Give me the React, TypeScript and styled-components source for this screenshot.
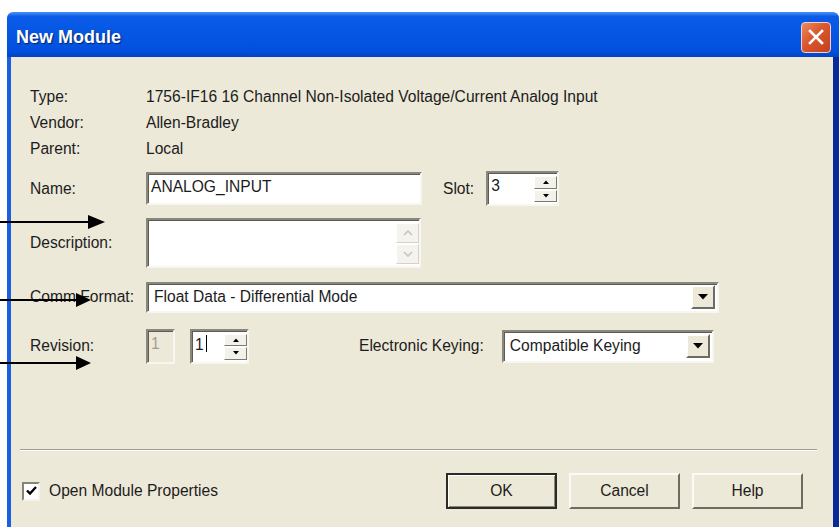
import styled, { createGlobalStyle } from 'styled-components';

const GlobalStyle = createGlobalStyle`
  html, body {
    margin: 0;
    padding: 0;
    background: #fff;
  }
  body {
    font-family: "Liberation Sans", Arial, sans-serif;
    font-size: 15.6px;
    color: #1c1c1c;
  }
`;

const Page = styled.div`
  position: relative;
  width: 839px;
  height: 527px;
  overflow: hidden;
  background: #fff;
`;

const Window = styled.div`
  margin: 12px 0 0 7px;
  width: 832px;
  height: 530px;
  display: flex;
  flex-direction: column;
`;

const TitleBar = styled.div`
  height: 45px;
  flex: none;
  display: flex;
  align-items: center;
  justify-content: space-between;
  padding: 0 8px 0 9px;
  border-radius: 6px 6px 0 0;
  background: linear-gradient(
    to bottom,
    #4a92f6 0%,
    #0a5ce8 10%,
    #0556e4 45%,
    #0350de 85%,
    #0344c8 100%
  );
`;

const Title = styled.span`
  font-family: "Liberation Sans", Arial, sans-serif;
  font-weight: 700;
  font-size: 18px;
  color: #fff;
  text-shadow: 1px 1px 1px #0b2270;
  padding-top: 6px;
`;

const CloseButton = styled.div`
  width: 30px;
  height: 31px;
  box-sizing: border-box;
  margin-top: 5px;
  border: 1px solid #f2d2c4;
  border-radius: 4px;
  background: linear-gradient(135deg, #ee8a62 0%, #d9562e 45%, #c2401c 100%);
  display: flex;
  align-items: center;
  justify-content: center;
`;

const Frame = styled.div`
  flex: 1;
  background: #ece9d8;
  border-left: 4px solid #1a5fe0;
  border-right: 6px solid #0a2a9c;
  display: flex;
  flex-direction: column;
`;

const Form = styled.div`
  padding: 27px 0 0 19px;
  display: flex;
  flex-direction: column;
`;

const Row = styled.div<{ $top?: number; $height: number }>`
  display: flex;
  align-items: center;
  height: ${(p) => p.$height}px;
  margin-top: ${(p) => p.$top ?? 0}px;
`;

const Label = styled.span`
  width: 116px;
  flex: none;
  white-space: nowrap;
`;

const Value = styled.span`
  white-space: nowrap;
`;

const InlineLabel = styled.span<{ $left: number; $right: number }>`
  margin-left: ${(p) => p.$left}px;
  margin-right: ${(p) => p.$right}px;
  white-space: nowrap;
`;

const Sunken = styled.div<{ $width: number; $height: number; $disabled?: boolean }>`
  box-sizing: border-box;
  width: ${(p) => p.$width}px;
  height: ${(p) => p.$height}px;
  flex: none;
  display: flex;
  align-items: flex-start;
  justify-content: space-between;
  padding: 4px 0 0 3px;
  border: 2px solid;
  border-color: #8a887c #f7f6f0 #f7f6f0 #8a887c;
  box-shadow: inset 1px 1px 0 #5d5b52;
  background: ${(p) => (p.$disabled ? '#ece9d8' : '#fff')};
  color: ${(p) => (p.$disabled ? '#a19f94' : '#1c1c1c')};
`;

const ComboBox = styled(Sunken)`
  align-items: center;
  padding: 0 2px 0 6px;
`;

const Caret = styled.span`
  display: inline-block;
  width: 1px;
  height: 17px;
  background: #000;
  margin-left: 2px;
  vertical-align: -2px;
`;

const SpinColumn = styled.div`
  display: flex;
  flex-direction: column;
  align-self: stretch;
  width: 23px;
  margin: -2px 0 2px 0;
`;

const SpinButton = styled.div<{ $disabled?: boolean }>`
  flex: 1;
  box-sizing: border-box;
  display: flex;
  align-items: center;
  justify-content: center;
  background: ${(p) => (p.$disabled ? '#f4f3ee' : '#f2f1ea')};
  border: 1px solid;
  border-color: ${(p) =>
    p.$disabled ? '#fff #d6d3c6 #d6d3c6 #fff' : '#fff #7d7b70 #7d7b70 #fff'};
  margin-top: 1px;
`;

const DropButton = styled.div`
  width: 24px;
  height: 24px;
  box-sizing: border-box;
  display: flex;
  align-items: center;
  justify-content: center;
  background: #ece9d8;
  border: 2px solid;
  border-color: #fff #6e6c62 #6e6c62 #fff;
`;

const Separator = styled.div`
  margin: 85px 16px 0 9px;
  height: 1px;
  background: #a19f92;
  border-bottom: 1px solid #fff;
`;

const Footer = styled.div`
  margin-top: 22px;
  padding: 0 30px 0 11px;
  display: flex;
  align-items: center;
  justify-content: space-between;
`;

const CheckRow = styled.label`
  display: flex;
  align-items: center;
  gap: 9px;
`;

const CheckBox = styled.span`
  width: 18px;
  height: 19px;
  box-sizing: border-box;
  display: flex;
  align-items: center;
  justify-content: center;
  background: #fff;
  border: 2px solid;
  border-color: #85837a #f4f3ee #f4f3ee #85837a;
`;

const ButtonRow = styled.div`
  display: flex;
  gap: 12px;
`;

const Button = styled.div<{ $default?: boolean }>`
  width: 111px;
  height: 36px;
  box-sizing: border-box;
  display: flex;
  align-items: center;
  justify-content: center;
  background: #ece9d8;
  border: 2px solid;
  border-color: ${(p) => (p.$default ? '#2a2a26' : '#fbfaf6 #6e6c62 #6e6c62 #fbfaf6')};
  box-shadow: ${(p) =>
    p.$default ? 'inset 1px 1px 0 #fff, inset -1px -1px 0 #8a887c' : 'none'};
`;

const Annotations = styled.svg`
  position: absolute;
  left: 0;
  top: 0;
  pointer-events: none;
`;

const UpTri = ({ color = '#000' }: { color?: string }) => (
  <svg width="6" height="4" viewBox="0 0 6 4">
    <path d="M0 4 L3 0.5 L6 4 Z" fill={color} />
  </svg>
);

const DownTri = ({ color = '#000' }: { color?: string }) => (
  <svg width="6" height="4" viewBox="0 0 6 4">
    <path d="M0 0 L6 0 L3 3.5 Z" fill={color} />
  </svg>
);

const Chevron = ({ up }: { up?: boolean }) => (
  <svg width="10" height="6" viewBox="0 0 10 6">
    <path
      d={up ? 'M1 5 L5 1 L9 5' : 'M1 1 L5 5 L9 1'}
      fill="none"
      stroke="#c9c6b8"
      strokeWidth="1.6"
    />
  </svg>
);

const Spinner = ({ width, children }: { width: number; children: React.ReactNode }) => (
  <Sunken $width={width} $height={35}>
    <span>{children}</span>
    <SpinColumn>
      <SpinButton>
        <UpTri />
      </SpinButton>
      <SpinButton>
        <DownTri />
      </SpinButton>
    </SpinColumn>
  </Sunken>
);

const Combo = ({ width, height, children }: { width: number; height: number; children: string }) => (
  <ComboBox $width={width} $height={height}>
    <span>{children}</span>
    <DropButton>
      <svg width="10" height="6" viewBox="0 0 10 6">
        <path d="M0 0 L10 0 L5 5.5 Z" fill="#000" />
      </svg>
    </DropButton>
  </ComboBox>
);

const Arrow = ({ y, base, tip }: { y: number; base: number; tip: number }) => (
  <g>
    <line x1="0" y1={y} x2={base + 2} y2={y} stroke="#000" strokeWidth="2" />
    <polygon points={`${base},${y - 7} ${tip},${y} ${base},${y + 7}`} fill="#000" />
  </g>
);

export default function App() {
  return (
    <Page>
      <GlobalStyle />
      <Window>
        <TitleBar>
          <Title>New Module</Title>
          <CloseButton>
            <svg width="16" height="16" viewBox="0 0 16 16">
              <path d="M2 2 L14 14 M14 2 L2 14" stroke="#fff" strokeWidth="2.6" strokeLinecap="square" />
            </svg>
          </CloseButton>
        </TitleBar>
        <Frame>
          <Form>
            <Row $height={26}>
              <Label>Type:</Label>
              <Value>1756-IF16 16 Channel Non-Isolated Voltage/Current Analog Input</Value>
            </Row>
            <Row $height={26}>
              <Label>Vendor:</Label>
              <Value>Allen-Bradley</Value>
            </Row>
            <Row $height={26}>
              <Label>Parent:</Label>
              <Value>Local</Value>
            </Row>
            <Row $top={10} $height={33}>
              <Label>Name:</Label>
              <Sunken $width={276} $height={33}>
                ANALOG_INPUT
              </Sunken>
              <InlineLabel $left={21} $right={12}>
                Slot:
              </InlineLabel>
              <Spinner width={73}>3</Spinner>
            </Row>
            <Row $top={13} $height={50}>
              <Label>Description:</Label>
              <Sunken $width={275} $height={50}>
                <span />
                <SpinColumn>
                  <SpinButton $disabled>
                    <Chevron up />
                  </SpinButton>
                  <SpinButton $disabled>
                    <Chevron />
                  </SpinButton>
                </SpinColumn>
              </Sunken>
            </Row>
            <Row $top={14} $height={30}>
              <Label>Comm Format:</Label>
              <Combo width={573} height={31}>
                Float Data - Differential Mode
              </Combo>
            </Row>
            <Row $top={16} $height={36}>
              <Label>Revision:</Label>
              <Sunken $width={29} $height={35} $disabled>
                1
              </Sunken>
              <InlineLabel $left={15} $right={0} />
              <Spinner width={59}>
                1<Caret />
              </Spinner>
              <InlineLabel $left={110} $right={18}>
                Electronic Keying:
              </InlineLabel>
              <Combo width={212} height={33}>
                Compatible Keying
              </Combo>
            </Row>
          </Form>
          <Separator />
          <Footer>
            <CheckRow>
              <CheckBox>
                <svg width="11" height="10" viewBox="0 0 11 10">
                  <path d="M1 4.5 L4 7.5 L10 1" fill="none" stroke="#000" strokeWidth="2.4" />
                </svg>
              </CheckBox>
              Open Module Properties
            </CheckRow>
            <ButtonRow>
              <Button $default>OK</Button>
              <Button>Cancel</Button>
              <Button>Help</Button>
            </ButtonRow>
          </Footer>
        </Frame>
      </Window>
      <Annotations width="839" height="527">
        <Arrow y={222} base={88} tip={105} />
        <Arrow y={300} base={76} tip={91} />
        <Arrow y={363} base={76} tip={91} />
      </Annotations>
    </Page>
  );
}
